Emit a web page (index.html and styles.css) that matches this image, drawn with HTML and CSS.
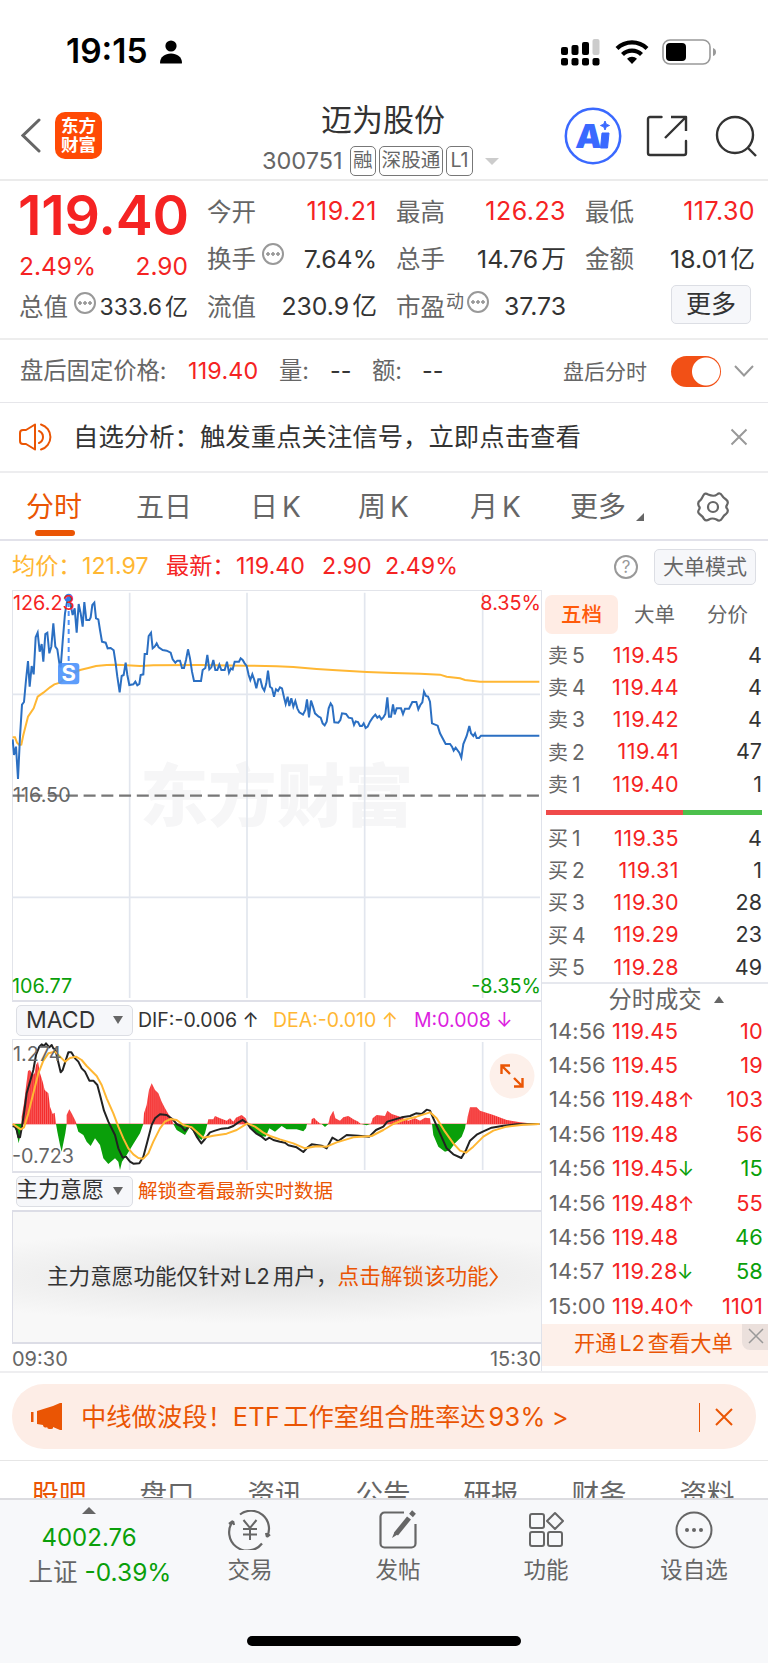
FILE: index.html
```html
<!DOCTYPE html>
<html lang="zh-CN">
<head>
  <meta charset="UTF-8">
  <meta name="viewport" content="width=device-width, initial-scale=1.0">
  <title>迈为股份 300751</title>
  <link rel="stylesheet" href="styles.css">
</head>
<body>
  <div class="phone">
    <div class="status-bar">
      <span class="clock">19:15</span>
      <svg class="person" width="24" height="24" viewBox="0 0 24 24"><circle cx="12" cy="6" r="5.6"/><path d="M1 23c0-6 5-9.500 11-9.500S23 17 23 23q0 .5-1 .5H2q-1 0-1-.5z"/></svg>
      <div class="status-icons">
        <svg width="39" height="28" viewBox="0 0 39 28">
          <rect x="0" y="9" width="7" height="8" rx="2"/><rect x="10.500" y="7" width="7" height="10" rx="2"/><rect x="21" y="4" width="7" height="13" rx="2"/><rect x="31.500" y="1" width="7" height="16" rx="2" fill="#ccc"/>
          <rect x="0" y="20" width="7" height="7.500" rx="2"/><rect x="10.500" y="20" width="7" height="7.500" rx="2"/><rect x="21" y="20" width="7" height="7.500" rx="2"/><rect x="31.500" y="20" width="7" height="7.500" rx="2"/>
        </svg>
        <svg class="wifi" width="34" height="26" viewBox="0 0 34 26" fill="none" stroke="#000" stroke-width="4.200">
          <path d="M2 9.500a21.500 21.500 0 0 1 30 0"/><path d="M7.500 15.500a13.500 13.500 0 0 1 19 0"/><path d="M17 25l-5-5.200a7 7 0 0 1 10 0z" fill="#000" stroke="none"/>
        </svg>
        <svg width="55" height="26" viewBox="0 0 55 26">
          <rect x="1" y="1" width="47" height="24" rx="7" fill="none" stroke="#999" stroke-width="1.600"/>
          <rect x="4" y="4" width="20" height="18" rx="4"/><path d="M51 9q3 1 3 4t-3 4z" fill="#999"/>
        </svg>
      </div>
    </div>

    <header class="header">
      <div class="header-left">
        <svg width="20" height="36" viewBox="0 0 20 36" fill="none" stroke="#666" stroke-width="3" stroke-linecap="round"><path d="M18 2L2 17.500l16 15.500"/></svg>
        <div class="logo">东方<br>财富</div>
      </div>
      <div class="header-title">
        <h1>迈为股份</h1>
        <div class="code-row">
          <span class="code">300751</span>
          <span class="tag">融</span><span class="tag">深股通</span><span class="tag">L1</span>
          <i class="tri-down pale"></i>
        </div>
      </div>
      <div class="header-right">
        <svg width="58" height="58" viewBox="0 0 58 58"><circle cx="29" cy="29" r="27.200" fill="none" stroke="#3a69ff" stroke-width="2.500"/><text class="ai" x="11" y="41" transform="skewX(-4) translate(3 0)">A</text><path d="M38 26h7l-1.500 15h-7zM41 14l1.300 3.200L45.500 18.500l-3.200 1.300L41 23l-1.300-3.200-3.200-1.300 3.200-1.300z" fill="#3a69ff" stroke="#3a69ff" stroke-width="1"/></svg>
        <svg width="42" height="42" viewBox="0 0 42 42" fill="none" stroke="#333" stroke-width="2.400" stroke-linecap="round" stroke-linejoin="round"><path d="M15.500 2H4a2 2 0 0 0-2 2v34a2 2 0 0 0 2 2h34a2 2 0 0 0 2-2V26"/><path d="M25 2h15v14M40 2L19 23" stroke-linecap="butt"/></svg>
        <svg width="42" height="42" viewBox="0 0 42 42" fill="none" stroke="#333" stroke-width="2.400"><circle cx="20" cy="20" r="18"/><path d="M33 33l8 8"/></svg>
      </div>
    </header>

    <section class="quote">
      <div class="col main-col">
        <div class="price">119.40</div>
        <div class="row change red"><span>2.49%</span><span>2.90</span></div>
        <div class="row small"><label>总值</label><i class="dots"></i><b>333.6<em>亿</em></b></div>
      </div>
      <div class="col">
        <div class="row"><label>今开</label><b class="red">119.21</b></div>
        <div class="row"><label>换手</label><i class="dots"></i><b>7.64%</b></div>
        <div class="row"><label>流值</label><b>230.9<em>亿</em></b></div>
      </div>
      <div class="col">
        <div class="row"><label>最高</label><b class="red">126.23</b></div>
        <div class="row"><label>总手</label><b>14.76<em>万</em></b></div>
        <div class="row"><label>市盈<sup>动</sup></label><i class="dots tight"></i><b>37.73</b></div>
      </div>
      <div class="col">
        <div class="row"><label>最低</label><b class="red">117.30</b></div>
        <div class="row"><label>金额</label><b>18.01<em>亿</em></b></div>
        <div class="row"><button class="more">更多</button></div>
      </div>
    </section>

    <section class="after-hours">
      <span class="ah-label">盘后固定价格:</span>
      <span class="ah-price red">119.40</span>
      <span class="ah-vol">量:</span><span class="dash">--</span>
      <span class="ah-amt">额:</span><span class="dash">--</span>
      <span class="ah-right">盘后分时</span>
      <span class="toggle"></span>
      <svg width="20" height="12" viewBox="0 0 20 12" fill="none" stroke="#999" stroke-width="2"><path d="M1 1l9 9.500L19 1"/></svg>
    </section>

    <section class="alert">
      <svg width="34" height="30" viewBox="0 0 34 30" fill="none" stroke="#ea5504" stroke-width="2" stroke-linejoin="round"><path d="M7 8H4q-3 0-3 3v8q0 3 3 3h3l9 5.500V2.500z"/><path d="M20 9a6.500 6.500 0 0 1 0 12M22 2.500a13 13 0 0 1 0 25" stroke-linecap="round"/></svg>
      <span class="alert-text">自选分析：触发重点关注信号，立即点击查看</span>
      <svg width="18" height="18" viewBox="0 0 18 18" stroke="#999" stroke-width="2"><path d="M1.500 1.500l15 15M16.500 1.500l-15 15"/></svg>
    </section>

    <nav class="period-tabs">
      <span class="active">分时</span><span>五日</span><span>日<u>K</u></span><span>周<u>K</u></span><span>月<u>K</u></span><span>更多</span><i class="corner"></i>
      <svg width="34" height="32" viewBox="0 0 34 32" fill="none" stroke="#666" stroke-width="2.200" stroke-linejoin="round"><path d="M12 3.500Q9 1 7 5T4 9.500Q1 11.500 3 15.500 4.500 16.500 3 18.500 1 21.500 4 23.500T8 28Q10 30.500 13 28.500T20.500 28.500Q24 31 26 27.500T30 23Q33 20.500 31 17.500 29.500 16 31 14 33 10.500 30 8.500T26 4.500Q24 1 21 3.500T12 3.500z"/><circle cx="17" cy="16" r="5"/></svg>
    </nav>

    <div class="legend">
      <span class="yellow lg-avg">均价：</span><span class="yellow lg-avg-num">121.97</span>
      <span class="red lg-new">最新：</span><span class="red lg-price">119.40</span><span class="red lg-chg">2.90</span><span class="red">2.49%</span>
      <span class="help">?</span>
      <button class="mode">大单模式</button>
    </div>

    <main class="trade">
      <div class="charts">
        <div class="price-chart">
          <svg width="529" height="411" viewBox="36 30 1587 1233">
            <text class="watermark" x="420" y="722">东方财富</text>
            <g stroke="#e2e6ee" stroke-width="5">
              <path d="M389 38V1254M741 38V1254M1094 38V1254M1448 38V1254M36 343H1620M36 952H1620"/>
            </g>
            <path d="M38 647H1618" stroke="#777" stroke-width="7" stroke-dasharray="36 17.200"/>
            <polyline fill="none" stroke="#ffb733" stroke-width="6" points="38,472 45,472 51,488 58,495 64,494 70,465 84,410 101,385 113,350 130,338 150,322 163,313 180,308 206,285 240,270 265,264 288,258 320,255 350,254 380,256 420,258 460,256 600,255 740,257 830,259 880,261 950,267 1010,271 1100,276 1180,279 1260,281 1320,284 1340,290 1380,295 1395,300 1440,305 1618,305"/>
            <polyline fill="none" stroke="#2b6fc2" stroke-width="6" points="38,478 42,525 48,500 54,597 60,470 66,374 72,366 78,300 84,243 89,320 95,258 101,283 107,172 113,158 119,215 125,192 130,245 136,162 142,158 148,220 154,200 160,130 166,200 172,208 178,250 182,262 188,185 195,100 200,72 206,45 212,75 218,105 224,85 230,158 236,72 242,100 248,140 253,66 259,120 268,120 272,112 277,75 283,68 288,115 295,118 300,150 306,185 317,188 323,205 332,204 341,211 347,250 352,290 359,337 365,288 371,285 377,248 382,285 388,315 400,313 406,305 412,316 418,312 422,285 430,283 434,222 441,222 446,168 453,158 458,205 464,200 470,190 476,202 488,210 500,212 512,218 518,238 526,248 532,242 540,242 546,264 552,264 558,240 564,208 570,235 576,275 582,303 603,303 608,270 616,264 622,225 628,268 634,262 640,240 646,270 652,270 658,254 664,270 674,270 681,245 687,278 693,265 698,268 704,245 717,245 722,235 728,240 734,250 740,258 746,285 751,300 757,283 763,300 769,325 775,298 781,298 787,322 793,332 799,310 804,272 810,320 816,325 822,350 828,328 834,333 840,322 846,325 852,352 857,372 863,350 868,378 874,355 880,380 886,363 892,385 898,397 909,404 916,390 921,358 927,412 933,362 939,380 945,400 956,410 962,413 968,430 974,436 980,425 986,385 992,370 997,378 1003,427 1015,428 1021,420 1026,400 1038,402 1046,413 1056,415 1062,435 1067,424 1074,426 1080,438 1086,438 1091,430 1097,444 1103,440 1110,425 1118,413 1126,404 1132,413 1138,408 1144,418 1150,412 1156,402 1162,352 1167,410 1173,410 1179,373 1184,403 1190,385 1203,385 1209,402 1215,386 1227,386 1237,366 1249,366 1255,388 1261,375 1267,367 1272,335 1278,348 1284,350 1290,365 1296,430 1313,437 1320,460 1337,492 1350,492 1356,500 1361,512 1367,503 1378,518 1384,533 1390,492 1400,468 1408,438 1413,460 1420,468 1425,460 1430,474 1437,474 1443,467 1618,467"/>
            <path d="M206 66V250" stroke="#4b92fb" stroke-width="6" stroke-dasharray="15 12"/>
            <circle cx="206" cy="54" r="13" fill="#2f7fe8"/>
            <rect x="174" y="249" width="64" height="64" rx="10" fill="#4b92fb" fill-opacity=".9"/>
            <text class="marker" x="206" y="303">S</text>
          </svg>
          <span class="lbl tl red">126.23</span>
          <span class="lbl tr red">8.35%</span>
          <span class="lbl mid">116.50</span>
          <span class="lbl bl green">106.77</span>
          <span class="lbl br green">-8.35%</span>
        </div>

        <div class="ind-head">
          <button class="select"><span class="macd">MACD</span><i class="tri-down"></i></button>
          <span class="dif">DIF:-0.006 ↑</span><span class="dea yellow">DEA:-0.010 ↑</span><span class="m">M:0.008 ↓</span>
        </div>
        <div class="macd-chart">
          <svg width="529" height="132" viewBox="36 150 1587 396">
            <defs>
              <pattern id="bars" width="5.870" height="600" patternUnits="userSpaceOnUse"><rect width="1.500" height="600" fill="#fff" fill-opacity=".5"/></pattern>
              <path id="up" d="M65 402V380L72 340 78 290 84 243 90 240 98 255 104 250 108 225 114 215 120 250 128 275 134 300 145 310 150 350 158 372 164 368 168 402zM200 402V375L208 358 216 372 225 390 230 402zM430 402L432 370 440 345 447 300 455 280 465 300 475 310 485 335 495 355 505 372 515 385 520 402zM622 402L625 388 640 388 645 378 660 385 680 392 690 385 700 395 708 383 725 375 737 385 745 402zM933 402L935 388 942 383 950 392 962 402zM985 402L990 380 1000 362 1006 385 1020 392 1030 382 1045 378 1060 388 1075 395 1082 402zM1113 402L1118 385 1130 375 1155 378 1162 362 1175 372 1200 380 1225 392 1245 385 1260 392 1275 383 1290 385 1292 402zM1400 402L1403 380 1410 352 1430 352 1440 362 1480 375 1520 390 1560 397 1610 402z"/>
              <path id="down" d="M38 402L48 420 56 460 62 430 66 402zM168 402L172 425 180 465 185 485 190 460 196 430 200 402zM228 402L235 425 250 435 260 455 272 468 285 445 300 465 310 505 325 522 345 505 355 515 360 540 366 515 380 495 400 462 420 430 430 402zM520 402L530 420 555 435 570 410 590 440 605 450 615 430 622 402zM745 402L755 420 780 438 797 440 808 415 825 425 845 408 860 418 890 418 910 424 918 415 921 402zM965 402L975 411 985 402zM1085 402L1100 406 1110 402zM1296 402L1300 435 1315 470 1335 485 1350 480 1365 460 1385 440 1395 415 1397 402z"/>
            </defs>
            <path d="M389 156V540M741 156V540M1094 156V540M1448 156V540" stroke="#e2e6ee" stroke-width="5"/>
            <path d="M38 402H1618" stroke="#f52a2a" stroke-width="2"/>
            <use href="#up" fill="#f52a2a"/><use href="#up" fill="url(#bars)"/>
            <use href="#down" fill="#0a9f0a"/>
            <polyline fill="none" stroke="#222" stroke-width="6" stroke-linejoin="round" points="38,408 45,410 50,420 55,442 60,442 65,415 72,370 80,310 90,275 100,240 108,195 118,170 125,163 132,168 138,160 148,172 155,165 160,175 166,178 172,205 182,247 188,240 196,215 205,187 214,187 225,205 235,215 245,235 255,245 268,272 280,272 292,285 300,315 312,362 325,395 345,435 355,475 368,503 378,500 390,515 400,521 418,520 430,500 442,455 455,405 465,385 480,373 500,375 518,388 530,402 545,410 555,422 568,408 580,420 590,440 604,460 615,447 630,427 645,422 665,416 685,414 700,408 715,397 728,390 742,400 752,415 768,430 785,440 797,450 808,443 820,450 840,455 855,458 865,466 890,472 910,486 922,473 935,463 965,467 980,475 997,443 1015,453 1040,435 1075,437 1108,440 1128,420 1150,410 1162,395 1185,388 1205,382 1230,378 1248,370 1265,372 1280,359 1290,362 1300,385 1320,430 1340,475 1360,493 1384,504 1398,480 1410,452 1430,434 1450,424 1475,413 1510,407 1550,403 1618,402"/>
            <polyline fill="none" stroke="#ffb733" stroke-width="6" stroke-linejoin="round" points="38,402 50,410 62,418 72,412 85,370 100,310 115,250 130,212 145,190 165,185 180,200 195,215 210,204 228,200 245,210 260,228 290,258 305,285 320,325 340,370 355,410 370,445 385,475 400,493 415,504 430,506 445,490 460,455 480,415 495,395 512,387 530,390 550,405 575,412 590,425 610,443 640,437 680,431 710,420 742,400 765,410 790,428 810,438 840,448 880,460 915,475 950,469 980,470 1010,457 1060,442 1115,438 1150,420 1180,402 1210,390 1250,380 1290,367 1310,385 1335,425 1360,460 1380,482 1398,488 1420,470 1450,440 1480,422 1520,410 1570,404 1618,402"/>
          </svg>
          <span class="lbl tl">1.274</span>
          <span class="lbl bl">-0.723</span>
          <svg class="expand" width="46" height="46" viewBox="0 0 46 46" fill="none" stroke="#ea5504" stroke-width="2.400"><circle cx="23" cy="23" r="22.500" fill="#fdf0ea" stroke="none"/><path d="M21 21L12.500 12.500M12.500 21v-8.500H21M25 25l8.500 8.500M33.500 25v8.500H25"/></svg>
        </div>

        <div class="ind-head second">
          <button class="select"><span class="main-force">主力意愿</span><i class="tri-down"></i></button>
          <span class="unlock">解锁查看最新实时数据</span>
        </div>
        <div class="locked">
          <span>主力意愿功能仅针对<u>L2</u>用户，</span><span class="orange">点击解锁该功能</span>
          <svg width="10" height="20" viewBox="0 0 10 20" fill="none" stroke="#ea5504" stroke-width="1.800"><path d="M1 1l7 9-7 9"/></svg>
        </div>
        <div class="times"><span>09:30</span><span>15:30</span></div>
      </div>

      <aside class="book">
        <div class="book-tabs"><span class="active">五档</span><span>大单</span><span>分价</span></div>
        <div class="depth">
          <div><label>卖<u>5</u></label><b>119.45</b><span>4</span></div>
          <div><label>卖<u>4</u></label><b>119.44</b><span>4</span></div>
          <div><label>卖<u>3</u></label><b>119.42</b><span>4</span></div>
          <div><label>卖<u>2</u></label><b>119.41</b><span>47</span></div>
          <div><label>卖<u>1</u></label><b>119.40</b><span>1</span></div>
        </div>
        <div class="ratio"></div>
        <div class="depth buy">
          <div><label>买<u>1</u></label><b>119.35</b><span>4</span></div>
          <div><label>买<u>2</u></label><b>119.31</b><span>1</span></div>
          <div><label>买<u>3</u></label><b>119.30</b><span>28</span></div>
          <div><label>买<u>4</u></label><b>119.29</b><span>23</span></div>
          <div><label>买<u>5</u></label><b>119.28</b><span>49</span></div>
        </div>
        <div class="ticks-title">分时成交<i class="tri-up"></i></div>
        <div class="ticks">
          <div><label>14:56</label><b>119.45</b><span class="red">10</span></div>
          <div><label>14:56</label><b>119.45</b><span class="red">19</span></div>
          <div><label>14:56</label><b>119.48<s>↑</s></b><span class="red">103</span></div>
          <div><label>14:56</label><b>119.48</b><span class="red">56</span></div>
          <div><label>14:56</label><b>119.45<s class="green">↓</s></b><span class="green">15</span></div>
          <div><label>14:56</label><b>119.48<s>↑</s></b><span class="red">55</span></div>
          <div><label>14:56</label><b>119.48</b><span class="green">46</span></div>
          <div><label>14:57</label><b>119.28<s class="green">↓</s></b><span class="green">58</span></div>
          <div><label>15:00</label><b>119.40<s>↑</s></b><span class="red">1101</span></div>
        </div>
        <div class="l2">开通<u>L2</u>查看大单
          <span class="l2-close"><svg width="16" height="16" viewBox="0 0 16 16" stroke="#999" stroke-width="1.500"><path d="M1 1l14 14M15 1L1 15"/></svg></span>
        </div>
      </aside>
    </main>

    <div class="banner-wrap">
      <div class="banner">
        <svg width="32" height="28" viewBox="0 0 32 28" fill="#ea5504"><path d="M0 9h2.500v10H0zM6 8l16-5 7-3h2v27h-2l-7-3v1q0 1-2 1h-2q-1.500 0-2-2-1 1-3 0-1-.5-1-2l-6-1z"/></svg>
        <span class="banner-text">中线做波段！<u>ETF</u>工作室组合胜率达<u>93%</u> &gt;</span>
        <i class="divider"></i>
        <svg width="18" height="18" viewBox="0 0 18 18" stroke="#ea5504" stroke-width="2"><path d="M1 1l16 16M17 1L1 17"/></svg>
      </div>
    </div>

    <nav class="info-tabs">
      <span class="active">股吧</span><span>盘口</span><span>资讯</span><span>公告</span><span>研报</span><span>财务</span><span>资料</span>
    </nav>

    <footer class="bottom-bar">
      <div class="index">
        <i class="tri-up"></i>
        <span class="green index-num">4002.76</span>
        <span class="index-row">上证 <span class="green">-0.39%</span></span>
      </div>
      <div class="item">
        <svg width="44" height="40" viewBox="0 0 44 40" fill="none" stroke="#666" stroke-width="2.200"><path d="M12 4.500A18 18 0 0 1 39 27M39 27l3-2.500M39 27l-1-4M34 33.500A18 18 0 0 1 5 11M5 11l-4 3M5 11l1 4"/><path d="M15.500 10l6.500 8 6.500-8M22 18v12M15 19h14M15 24.500h14" stroke-width="2"/></svg>
        <span>交易</span>
      </div>
      <div class="item">
        <svg width="40" height="40" viewBox="0 0 40 40" fill="none" stroke="#666" stroke-width="2.200"><path d="M26 2.500H6.500a4 4 0 0 0-4 4v27a4 4 0 0 0 4 4h27a4 4 0 0 0 4-4V14"/><path d="M31 8L18 24" stroke-width="5"/><path d="M33 5.500L36 2" stroke-width="5"/><path d="M16.500 22l-2.500 6 5.500-3.500z" fill="#666" stroke="none"/></svg>
        <span>发帖</span>
      </div>
      <div class="item">
        <svg width="38" height="40" viewBox="0 0 38 40" fill="none" stroke="#666" stroke-width="2" stroke-linejoin="round"><rect x="3" y="4" width="14" height="14" rx="2"/><rect x="3" y="22" width="14" height="14" rx="2"/><rect x="21" y="22" width="14" height="14" rx="2"/><path d="M28 3l8 8-8 8-8-8z"/></svg>
        <span>功能</span>
      </div>
      <div class="item">
        <svg width="40" height="40" viewBox="0 0 40 40" fill="none" stroke="#666" stroke-width="2"><circle cx="20" cy="20" r="17.500"/><g fill="#666" stroke="none"><circle cx="13" cy="20" r="2"/><circle cx="20" cy="20" r="2"/><circle cx="27" cy="20" r="2"/></g></svg>
        <span>设自选</span>
      </div>
      <div class="home-indicator"></div>
    </footer>
  </div>
</body>
</html>
```
FILE: styles.css
```css
:root {
  --red: #f52323;
  --green: #0a9f0a;
  --orange: #ea5504;
  --yellow: #ffb733;
  --dark: #333;
  --gray: #666;
  --line: #e6e6ea;
}

* {
  margin: 0;
  padding: 0;
  box-sizing: border-box;
}

body {
  font-family: Inter, "Noto Sans CJK SC", sans-serif;
  line-height: 1;
  color: var(--dark);
  background: #fff;
}

b, em, i, u, s {
  font-weight: inherit;
  font-style: normal;
  text-decoration: none;
}

button {
  font-family: inherit;
  color: var(--dark);
  background: #f6f7fa;
  border: 1.5px solid #dcdee4;
  border-radius: 5px;
}

svg {
  display: block;
  flex-shrink: 0;
}

.red { color: var(--red); }
.green { color: var(--green); }
.yellow { color: var(--yellow); }
.orange { color: var(--orange); }

.phone {
  width: 768px;
  height: 1663px;
  overflow: hidden;
  display: flex;
  flex-direction: column;
}

.phone > * {
  flex-shrink: 0;
}

.tri-down, .tri-up {
  width: 0;
  height: 0;
  border: 5px solid transparent;
}

.tri-down {
  border-top: 8px solid #666;
  border-bottom: 0;
}

.tri-up {
  border-bottom: 7px solid #666;
  border-top: 0;
}

/* Status bar */
.status-bar {
  height: 102px;
  padding: 1px 51px 0 66px;
  display: flex;
  align-items: center;
}

.clock {
  font-size: 33.500px;
  font-weight: 600;
  color: #000;
  width: 93px;
}

.status-icons {
  margin-left: auto;
  display: flex;
  align-items: center;
}

.wifi {
  margin: 0 13px 0 15px;
}

/* Header */
.header {
  height: 79px;
  border-bottom: 2px solid #ebebeb;
  display: grid;
  grid-template-columns: 262px 1fr 212px;
}

.header-left {
  padding: 10px 0 0 21px;
  display: flex;
  align-items: flex-start;
  gap: 14px;
}

.header-left svg {
  margin-top: 6px;
}

.logo {
  width: 47px;
  height: 47px;
  padding-top: 5px;
  border-radius: 10px;
  background: #ff4a05;
  color: #fff;
  font-size: 17.500px;
  font-weight: 700;
  line-height: 18.500px;
  text-align: center;
}

h1 {
  font-size: 31px;
  font-weight: 400;
  line-height: 35px;
  padding-left: 59px;
}

.code-row {
  display: flex;
  align-items: center;
  margin-top: 9px;
  color: var(--gray);
}

.code {
  font-size: 23.500px;
  width: 88px;
}

.tag {
  height: 30px;
  padding: 0 2px;
  margin-right: 3px;
  border: 1.5px solid #777;
  border-radius: 5px;
  font-size: 19.600px;
  line-height: 27px;
}

.tag:nth-child(4) {
  padding: 0 3px;
}

.tri-down.pale {
  border-width: 7px 7px 0;
  border-top-color: #ccc;
  margin-left: 9px;
}

.header-right {
  display: flex;
  align-items: flex-start;
  padding-left: 8px;
}

.header-right svg:nth-child(1) { margin: 5px 24px 0 0; }
.header-right svg:nth-child(2) { margin: 13px 27px 0 0; }
.header-right svg:nth-child(3) { margin: 13px 0 0; }

.ai {
  font-size: 33px;
  font-weight: 900;
  fill: #3a69ff;
}

/* Quote */
.quote {
  height: 159px;
  padding: 7px 13px 0 19px;
  border-bottom: 2px solid #ededed;
  display: grid;
  grid-template-columns: 169px 170px 170px 170px;
  column-gap: 19px;
}

.row {
  height: 47.5px;
  display: flex;
  align-items: center;
  font-size: 24.500px;
}

.row label {
  color: var(--gray);
  white-space: nowrap;
}

.row b {
  margin-left: auto;
  white-space: nowrap;
  font-size: 24.800px;
}

.row b.red {
  font-size: 25px;
  letter-spacing: 0.45px;
}

.row em {
  margin-left: 3px;
}

.price {
  height: 55px;
  font-size: 55.500px;
  font-weight: 600;
  line-height: 53px;
  color: var(--red);
  letter-spacing: -0.2px;
  margin-left: -1px;
}

.change {
  height: 46px;
  justify-content: space-between;
}

.main-col .row.small {
  height: 37px;
}

.row.small b {
  font-size: 23px;
}

.dots {
  width: 22px;
  height: 22px;
  margin: -10px 0 0 6px;
  border: 2px solid #999;
  border-radius: 50%;
  background: radial-gradient(circle at 4px 9px, #999 1.500px, transparent 2px), radial-gradient(circle at 9px 9px, #999 1.500px, transparent 2px), radial-gradient(circle at 14px 9px, #999 1.500px, transparent 2px);
}

.dots.tight {
  margin-left: 3px;
}

sup {
  font-size: 18px;
  position: relative;
  top: -8px;
  vertical-align: baseline;
  margin-left: 1px;
}

.more {
  width: 80px;
  height: 39px;
  margin: -5px 4px 0 auto;
  font-size: 25px;
  line-height: 35px;
}

/* After-hours */
.after-hours {
  height: 63px;
  padding: 0 14px 0 20px;
  border-bottom: 1.500px solid var(--line);
  display: flex;
  align-items: center;
  font-size: 23.300px;
  color: var(--gray);
}

.ah-label { width: 168px; white-space: nowrap; }
.ah-price { width: 91px; letter-spacing: 0.2px; }
.ah-vol { width: 51px; }
.ah-amt { width: 50px; }
.dash { width: 42px; color: var(--dark); }

.ah-right {
  font-size: 21px;
  margin-left: auto;
}

.toggle {
  width: 50px;
  height: 31px;
  margin: 0 13px 0 24px;
  border-radius: 16px;
  background: radial-gradient(circle at 35px 15.500px, #fff 13.500px, #f25016 14.500px);
}

/* Alert */
.alert {
  height: 70px;
  padding: 0 20px 0 19px;
  border-bottom: 2px solid #ededef;
  display: flex;
  align-items: center;
}

.alert-text {
  margin: 0 auto 0 20px;
  font-size: 25.400px;
}

/* Period tabs */
.period-tabs {
  height: 68px;
  padding: 1px 38px 0 26px;
  border-bottom: 2px solid #e2e2ea;
  display: flex;
  align-items: center;
  font-size: 28px;
  color: var(--gray);
}

.period-tabs span {
  width: 110px;
  height: 28px;
}

.period-tabs span:nth-child(2) { width: 114px; }
.period-tabs span:nth-child(3) { width: 108px; }
.period-tabs span:nth-child(4) { width: 112px; }
.period-tabs span:nth-child(5) { width: 100px; }
.period-tabs span:nth-child(6) { width: 66px; }

.period-tabs u {
  margin-left: 4px;
}

.period-tabs .active {
  color: var(--orange);
}

.period-tabs .active::after {
  content: "";
  display: block;
  width: 40px;
  height: 6px;
  margin: 9px 0 0 9px;
  border-radius: 3px;
  background: var(--orange);
}

.corner {
  border: 4px solid transparent;
  border-right-color: #666;
  border-bottom-color: #666;
  margin-top: 20px;
}

.period-tabs svg {
  margin-left: auto;
}

/* Legend */
.legend {
  height: 49px;
  padding: 2px 12px 0;
  display: flex;
  align-items: center;
  font-size: 23.200px;
}

.legend > span {
  white-space: nowrap;
}

.lg-avg { width: 70px; }
.lg-avg-num { width: 84px; }
.lg-new { width: 70px; }
.lg-price { width: 86px; }
.lg-chg { width: 63px; }

.help {
  width: 24px;
  height: 24px;
  margin-left: auto;
  border: 2px solid #999;
  border-radius: 50%;
  color: #999;
  font-size: 17px;
  line-height: 20px;
  text-align: center;
}

.mode {
  width: 102px;
  height: 36px;
  margin-left: 16px;
  font-size: 21px;
  line-height: 32px;
  color: var(--gray);
}

/* Charts */
.trade {
  height: 783px;
  border-bottom: 2px solid #eeeef0;
  display: flex;
}

.charts {
  width: 542px;
  padding-left: 12px;
  border-right: 1px solid #dfe2ea;
}

.price-chart, .macd-chart {
  position: relative;
  border-top: 1px solid #e2e4ea;
  border-left: 1px solid #e2e4ea;
  border-bottom: 2px solid #dfe0e8;
}

.price-chart { height: 412px; }
.macd-chart { height: 134px; }

.price-chart > svg, .macd-chart > svg:first-child {
  margin-left: -1px;
}

.price-chart > svg {
  margin-top: -1px;
}

.watermark {
  font-size: 205px;
  font-weight: 900;
  fill: #f6f6f7;
}

.marker {
  font-size: 66px;
  font-weight: 700;
  fill: #fff;
  text-anchor: middle;
}

.lbl {
  position: absolute;
  font-size: 19.800px;
  color: var(--gray);
}

.lbl.red { color: var(--red); }
.lbl.green { color: var(--green); }
.lbl.tl { top: 3px; left: 0; }
.lbl.tr { top: 3px; right: 0; }
.lbl.mid { top: 195px; left: 0; }
.lbl.bl { bottom: 3px; left: -1px; }
.lbl.br { bottom: 3px; right: 0; }
.macd-chart .lbl.tl { top: 5px; }
.macd-chart .lbl.bl { bottom: 4px; }

.expand {
  position: absolute;
  top: 13px;
  right: 6px;
}

.ind-head {
  height: 37px;
  padding: 1px 0 0 4px;
  display: flex;
  align-items: center;
  font-size: 19.500px;
  white-space: nowrap;
}

.select {
  width: 117px;
  height: 31px;
  padding: 0 9px;
  margin: -2px 5px 0 0;
  display: flex;
  align-items: center;
  justify-content: space-between;
  flex-shrink: 0;
}

.macd { font-size: 23px; }
.main-force { font-size: 22px; line-height: 26px; margin: -4px 0 0 -10px; }
.dif { width: 135px; }
.dea { width: 141px; }
.m { color: #dc1ee0; }
.unlock { font-size: 19.500px; color: var(--orange); }

.locked {
  height: 134px;
  border: 1px solid #dcdde6;
  border-width: 2px 0 2px 1px;
  background: radial-gradient(ellipse 75% 36% at 50% 50%, #e3e3e3, #f8f8f8 100%);
  display: flex;
  align-items: center;
  padding-left: 34px;
  font-size: 21.600px;
}

.locked u, .l2 u {
  margin: 0 3px;
}

.times {
  height: 30px;
  display: flex;
  align-items: center;
  justify-content: space-between;
  font-size: 20px;
  color: var(--gray);
}

/* Order book */
.book {
  width: 226px;
  position: relative;
}

.book-tabs {
  height: 49.500px;
  padding: 5px 0 0 3px;
  display: flex;
}

.book-tabs span {
  width: 73px;
  height: 39px;
  font-size: 20.500px;
  line-height: 39px;
  text-align: center;
  color: var(--gray);
}

.book-tabs .active {
  color: #ff5a0a;
  font-weight: 500;
  background: #ffece4;
  border-radius: 7px;
}

.depth div {
  height: 32.200px;
  padding: 0 6px 0 6px;
  display: flex;
  align-items: center;
  font-size: 21.500px;
}

.depth label {
  width: 46px;
  font-size: 20px;
  color: var(--gray);
  white-space: nowrap;
}

.depth u {
  font-size: 21px;
  margin-left: 4px;
}

.depth b {
  width: 85px;
  text-align: right;
  color: var(--red);
  letter-spacing: 0.45px;
}

.depth span {
  margin-left: auto;
}

.ratio {
  height: 5px;
  margin: 10px 6px 7px 4px;
  background: linear-gradient(90deg, #f04a4a 63.500%, #4cc04c 63.500%);
}

.ticks-title {
  height: 33px;
  margin-top: -1px;
  border-top: 2px solid #e6e8ee;
  display: flex;
  align-items: center;
  justify-content: center;
  gap: 12px;
  padding-left: 22px;
  font-size: 23.300px;
  color: var(--gray);
}

.ticks {
  margin-top: -1px;
}

.ticks div {
  height: 34.400px;
  padding: 0 5px 0 7px;
  display: flex;
  align-items: center;
  font-size: 21.800px;
  letter-spacing: 0.15px;
}

.ticks label {
  width: 63px;
  color: var(--gray);
}

.ticks b {
  color: var(--red);
  white-space: nowrap;
  letter-spacing: 0.35px;
}

.ticks s {
  font-size: 20px;
  margin-left: -1px;
}

.ticks span {
  margin-left: auto;
}

.l2 {
  height: 42px;
  padding-left: 32px;
  background: #fdf0ea;
  color: var(--orange);
  font-size: 21.300px;
  line-height: 38px;
  position: relative;
}

.l2-close {
  position: absolute;
  top: 0;
  right: 0;
  width: 26px;
  height: 26px;
  padding: 4px 0 0 6px;
  border-bottom-left-radius: 8px;
  background: #ebe0dc;
}

/* Banner */
.banner-wrap {
  height: 88px;
  padding: 11px 12px 0;
  border-bottom: 1.500px solid #e6e6e6;
}

.banner {
  height: 65px;
  padding: 1px 23px 0 19px;
  border-radius: 32px;
  background: #fdede6;
  color: var(--orange);
  font-size: 25.300px;
  display: flex;
  align-items: center;
}

.banner-text {
  margin: 0 auto 0 18px;
}

.banner-text u {
  letter-spacing: 0.3px;
  margin-right: 3px;
}

.banner-text u + u {
  margin: 0 -1px 0 3px;
}

.divider {
  width: 1.500px;
  height: 29px;
  margin-right: 15px;
  background: var(--orange);
}

.info-tabs {
  height: 37px;
  padding: 20px 7px 0 5px;
  overflow: hidden;
  display: flex;
  font-size: 27.500px;
  color: var(--gray);
}

.info-tabs span {
  flex: 1;
  text-align: center;
}

.info-tabs .active {
  color: var(--orange);
}

/* Bottom bar */
.bottom-bar {
  height: 165px;
  border-top: 2px solid #dcdce0;
  background: #f7f8fa;
  position: relative;
  padding-left: 2px;
  display: grid;
  grid-template-columns: 174px repeat(4, 148px);
}

.index {
  display: flex;
  flex-direction: column;
  align-items: center;
  padding-top: 7px;
}

.index .tri-up {
  border-width: 0 7px 7px;
}

.index-num {
  font-size: 24px;
  margin-top: 12px;
}

.index-row {
  font-size: 24.500px;
  margin-top: 10px;
  padding-left: 22px;
  color: var(--gray);
  white-space: nowrap;
}

.item {
  display: flex;
  flex-direction: column;
  align-items: center;
  padding-top: 10px;
  font-size: 22.500px;
  color: var(--gray);
}

.item span {
  margin-top: 9px;
}

.home-indicator {
  position: absolute;
  left: 247px;
  bottom: 17px;
  width: 274px;
  height: 10px;
  border-radius: 5px;
  background: #000;
}
```
